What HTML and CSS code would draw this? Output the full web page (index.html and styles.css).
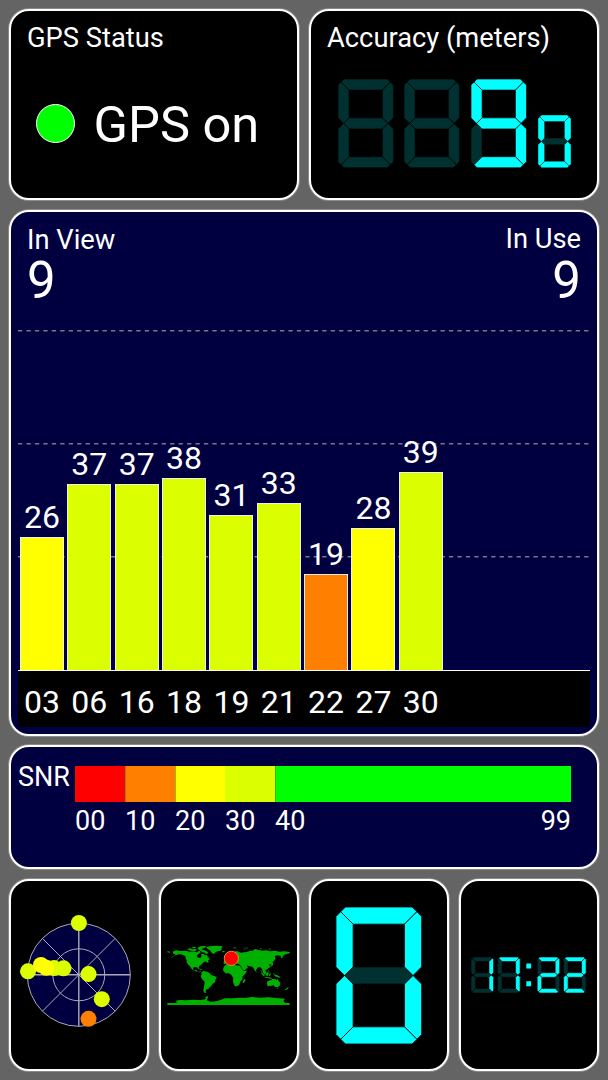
FILE: index.html
```html
<!DOCTYPE html>
<html lang="en">
<head>
<meta charset="utf-8">
<title>GPS Status</title>
<link rel="stylesheet" href="styles.css">
</head>
<body>
<svg class="defs" width="0" height="0" aria-hidden="true">
  <defs>
    <path id="a" d="M1.1 0H8.9L9.45 .55 8 2H2L.55 .55Z"/>
    <path id="b" d="M10 1.1V7L9 8 8 7V2L9.45 .55Z"/>
    <path id="c" d="M10 14.9V9L9 8 8 9V14L9.45 15.45Z"/>
    <path id="d" d="M1.1 16H8.9L9.45 15.45 8 14H2L.55 15.45Z"/>
    <path id="e" d="M0 14.9V9L1 8 2 9V14L.55 15.45Z"/>
    <path id="f" d="M0 1.1V7L1 8 2 7V2L.55 .55Z"/>
    <path id="g" d="M1 8L2 7H8L9 8 8 9H2Z"/>
    <g id="blank"><use href="#a"/><use href="#b"/><use href="#c"/><use href="#d"/><use href="#e"/><use href="#f"/><use href="#g"/></g>
  </defs>
</svg>
<main class="dashboard">
  <section class="row row-top">
    <div class="panel status">
      <h2 class="title">GPS Status</h2>
      <div class="status-line"><span class="lamp"></span><span class="status-text">GPS on</span></div>
    </div>
    <div class="panel accuracy">
      <h2 class="title">Accuracy (meters)</h2>
      <div class="readout">
        <svg class="digit" viewBox="0 0 10 16"><use class="off" href="#blank"/></svg>
        <svg class="digit" viewBox="0 0 10 16"><use class="off" href="#blank"/></svg>
        <svg class="digit" viewBox="0 0 10 16"><use class="off" href="#e"/><g class="on"><use href="#a"/><use href="#b"/><use href="#c"/><use href="#d"/><use href="#f"/><use href="#g"/></g></svg>
        <svg class="digit small" viewBox="0 0 10 16"><use class="off" href="#g"/><g class="on"><use href="#a"/><use href="#b"/><use href="#c"/><use href="#d"/><use href="#e"/><use href="#f"/></g></svg>
      </div>
    </div>
  </section>

  <section class="panel signal">
    <header class="counts">
      <div class="count in-view"><span class="count-label">In View</span><span class="count-value">9</span></div>
      <div class="count in-use"><span class="count-label">In Use</span><span class="count-value">9</span></div>
    </header>
    <div class="plot">
      <svg class="gridlines" viewBox="0 0 572 360">
        <path d="M0 20.7H572M0 133.7H572M0 246.8H572"/>
      </svg>
      <div class="bars">
        <div class="item"><span class="snr">26</span><i class="bar fair" style="height:133px"></i></div>
        <div class="item"><span class="snr">37</span><i class="bar good" style="height:186px"></i></div>
        <div class="item"><span class="snr">37</span><i class="bar good" style="height:186px"></i></div>
        <div class="item"><span class="snr">38</span><i class="bar good" style="height:192px"></i></div>
        <div class="item"><span class="snr">31</span><i class="bar good" style="height:155px"></i></div>
        <div class="item"><span class="snr">33</span><i class="bar good" style="height:167px"></i></div>
        <div class="item"><span class="snr">19</span><i class="bar weak" style="height:96px"></i></div>
        <div class="item"><span class="snr">28</span><i class="bar fair" style="height:142px"></i></div>
        <div class="item"><span class="snr">39</span><i class="bar good" style="height:198px"></i></div>
      </div>
    </div>
    <div class="axis">
      <span>03</span><span>06</span><span>16</span><span>18</span><span>19</span><span>21</span><span>22</span><span>27</span><span>30</span>
    </div>
  </section>

  <section class="panel legend">
    <span class="legend-name">SNR</span>
    <div class="scale">
      <div class="swatch none"></div><div class="swatch weak"></div><div class="swatch fair"></div><div class="swatch good"></div><div class="swatch best"></div>
      <span>00</span><span>10</span><span>20</span><span>30</span><span class="ends"><b>40</b><b>99</b></span>
    </div>
  </section>

  <section class="row row-bottom">
    <div class="panel">
      <svg class="tile" viewBox="11 881 136 188">
        <g class="sky">
          <circle class="disc" cx="78.8" cy="974.8" r="51.5"/>
          <circle cx="78.8" cy="974.8" r="26"/>
          <path d="M42.4 938.4L115.2 1011.2M115.2 938.4L42.4 1011.2"/>
          <path class="axes" d="M27.3 974.8H130.3M78.8 923.3V1026.3"/>
        </g>
        <g class="sat-good">
          <circle cx="78.9" cy="923" r="8"/><circle cx="28" cy="971.3" r="8"/>
          <circle cx="63.5" cy="968.3" r="8"/><circle cx="54" cy="968.1" r="8"/>
          <circle cx="88.6" cy="974.1" r="8"/><circle cx="101.8" cy="999.2" r="8"/>
        </g>
        <g class="sat-fair"><circle cx="41" cy="965" r="8"/><circle cx="46.3" cy="967.8" r="8"/></g>
        <circle class="sat-weak" cx="88.5" cy="1018.8" r="8"/>
      </svg>
    </div>
    <div class="panel">
      <svg class="tile" viewBox="161 881 136 188">
        <g transform="translate(160 930) scale(.33333)">
          <g class="land">
            <path d="M22 64L32 65 30 68 22 67ZM38 65L48 61 62 63 76 62 90 65 101 64 110 67 118 62 122 67 116 72 110 77 114 83 121 84 125 78 123 72 131 72 135 76 141 74 144 82 149 88 143 92 148 95 141 98 136 94 128 99 124 104 119 107 116 112 118 118 113 113 107 111 101 112 99 117 103 121 109 119 111 123 118 126 120 123 123 125 118 127 108 124 100 120 95 117 91 110 84 103 80 97 81 87 76 79 68 74 57 73 46 76 39 79 47 73 40 71Z"/>
            <path d="M82 57L91 55 98 58 105 56 111 59 106 63 94 62 87 61ZM94 52L104 50 109 53 101 55ZM111 55L121 49 139 48 134 54 124 57 130 60 139 63 146 70 139 72 134 68 126 66 119 61Z"/>
            <path d="M137 53L148 49 168 47 189 49 184 54 186 58 181 62 173 64 166 67 162 72 156 70 151 62 144 57Z"/>
            <path d="M186 63L193 62 195 65 189 67ZM219 53L229 52 227 55 220 55ZM203 77L207 74 209 82 204 84ZM112 115L120 116 126 118 124 120 115 117Z"/>
            <path d="M124 127L131 123 141 125 149 129 153 135 163 138 170 142 167 148 165 157 158 161 153 169 147 173 145 178 139 178 137 184 139 188 132 188 130 181 133 165 134 155 126 147 122 139 125 133Z"/>
            <path d="M193 103L190 98 194 92 204 91 209 85 216 83 219 77 216 70 228 63 237 65 243 69 251 67 262 66 268 63 278 62 285 57 296 60 307 62 318 61 331 64 345 62 359 65 373 64 390 66 389 70 376 73 368 78 363 86 362 77 352 76 344 78 347 85 341 94 335 98 337 103 333 105 330 101 327 104 331 110 326 115 319 119 316 121 319 129 313 134 308 126 307 119 301 111 294 112 288 121 286 125 281 115 277 110 267 108 260 106 264 112 256 119 250 121 244 112 241 106 237 103 229 100 225 98 220 93 216 98 207 98 200 99Z"/>
            <path d="M196 104L207 101 219 104 229 106 240 107 247 119 252 123 261 122 256 131 248 139 247 148 241 155 238 164 231 169 224 168 219 157 220 145 214 134 206 130 196 130 189 121 190 113Z"/>
            <path d="M249 153L254 146 257 150 252 159 248 158ZM290 122L293 127 290 127ZM334 99L339 97 339 105 332 110 329 109 336 104ZM325 119L329 124 326 126ZM303 126L309 131 315 138 311 139 305 133ZM317 130L325 125 326 132 323 138 317 136ZM328 132L332 130 331 138 327 138ZM340 133L350 135 358 139 362 144 354 142 345 139ZM314 141L327 142 337 144 334 146 315 143ZM326 129L333 128 332 130 327 130Z"/>
            <path d="M322 154L331 151 337 147 346 147 349 151 353 146 356 153 361 159 359 167 353 172 346 171 340 166 331 168 323 169 321 161ZM351 174H355L353 177ZM382 173L387 171 383 177 376 181 375 178Z"/>
            <path d="M22 219H50L48 212 60 210 78 211 98 209 121 210 137 208 136 202 145 197 143 205 140 211 152 215 169 214 184 209 195 205 219 205 240 203 257 204 274 201 300 203 325 202 348 204 375 206 370 213 376 219H389V225H22Z"/>
            <path d="M76 81L84 76 109 74 111 82 105 88 112 98 104 106 91 105 82 96Z"/>
          </g>
          <g class="coast"><path d="M300 57L306 55M251 58L256 55 263 54M326 57L333 57M370 77L366 84M338 88L342 93M40 80L34 83M302 120L312 136M320 116L323 116M340 130L344 134M144 82L149 86"/></g>
          <circle class="here" cx="214" cy="85" r="21.3"/>
        </g>
      </svg>
    </div>
    <div class="panel center">
      <svg class="digit large" viewBox="0 0 10 16"><use class="off" href="#g"/><g class="on"><use href="#a"/><use href="#b"/><use href="#c"/><use href="#d"/><use href="#e"/><use href="#f"/></g></svg>
    </div>
    <div class="panel">
      <svg class="tile clock" viewBox="461 881 136 188">
        <g transform="translate(471 957) scale(2.25)"><use class="off" href="#blank"/><g class="on"><use href="#b"/><use href="#c"/></g></g>
        <g transform="translate(497.6 957) scale(2.25)"><use class="off" href="#blank"/><g class="on"><use href="#a"/><use href="#b"/><use href="#c"/></g></g>
        <path class="colon" d="M526.3 963.5h4.8v5h-4.8zM526.3 981.2h4.8v5h-4.8z"/>
        <g transform="translate(537.2 957) scale(2.25)"><use class="off" href="#blank"/><g class="on"><use href="#a"/><use href="#b"/><use href="#g"/><use href="#e"/><use href="#d"/></g></g>
        <g transform="translate(563.6 957) scale(2.25)"><use class="off" href="#blank"/><g class="on"><use href="#a"/><use href="#b"/><use href="#g"/><use href="#e"/><use href="#d"/></g></g>
      </svg>
    </div>
  </section>
</main>
</body>
</html>
```
FILE: styles.css
```css
* { box-sizing: border-box; }
body {
  margin: 0;
  background: #646464;
  color: #fff;
  font-family: Roboto, "Liberation Sans", sans-serif;
}
.defs { display: block; }
.dashboard {
  display: flex;
  flex-direction: column;
  width: 608px;
  height: 1080px;
  padding: 9px 9px 9px;
}
.row { display: grid; gap: 10px; }
.row-top { grid-template-columns: 290px 290px; height: 191px; margin-bottom: 10px; }
.row-bottom { grid-template-columns: repeat(4, 140px); height: 192px; }
.panel {
  border: 2px solid #fff;
  border-radius: 20px;
  background: #000;
  box-shadow: 0 0 0 1px rgba(255, 255, 255, .25);
  overflow: hidden;
}
.title {
  margin: 11px 0 0 16px;
  font-size: 27.3px;
  font-weight: 400;
  line-height: 32px;
}
.status-line { display: flex; align-items: center; margin: 40px 0 0 25px; }
.lamp {
  width: 39px;
  height: 39px;
  margin-top: -4px;
  border: 1.5px solid #fff;
  border-radius: 50%;
  background: #0f0;
}
.status-text { margin-left: 18.5px; font-size: 50.6px; line-height: 62px; }
.readout { display: flex; align-items: flex-end; gap: 11.3px; margin: 25px 0 0 26.7px; }

/* Seven-segment digits */
.digit { display: block; width: 55.5px; height: 88.8px; overflow: visible; }
.digit.small { width: 33px; height: 52.8px; }
.digit.large { width: 85.6px; height: 137px; }
.on, .off { stroke: #000; stroke-width: .12; }
.digit.large .on, .digit.large .off { stroke-width: .09; }
.clock .on, .clock .off { stroke-width: .25; }
.on { fill: #0ff; }
.off { fill: #003030; }
.colon { fill: #0ff; }

/* Satellite signal chart */
.signal { height: 526px; margin-bottom: 9px; padding: 0 7px; background: #000040; }
.counts { display: flex; justify-content: space-between; height: 98px; padding: 0 9px 0 9px; }
.count { display: flex; flex-direction: column; }
.in-view { padding-top: 12px; }
.in-use { padding-top: 11px; align-items: flex-end; }
.count-label { font-size: 27.3px; line-height: 32px; }
.count-value { font-size: 51px; line-height: 50px; }
.in-use .count-value { margin-top: 1px; }
.plot { display: grid; height: 361px; border-bottom: 1px solid #fff; }
.gridlines, .bars { grid-area: 1 / 1; }
.gridlines { width: 572px; height: 360px; }
.gridlines path { stroke: #777788; stroke-width: 1.6; stroke-dasharray: 4.3 4.15; }
.bars { display: flex; align-items: flex-end; gap: 3.35px; padding-left: 2px; }
.item { display: flex; flex-direction: column; align-items: center; width: 44px; }
.snr { font-size: 32px; line-height: 30px; margin-bottom: 5px; }
.bar { display: block; width: 44px; border: 1px solid #eee; border-bottom: 0; }
.axis { display: flex; gap: 3.35px; height: 56px; padding-left: 2px; background: #000; font-size: 32px; line-height: 62px; }
.axis span { width: 44px; text-align: center; }
.none { background: #f00; }
.weak { background: #ff8000; }
.fair { background: #ff0; }
.good { background: #dcff00; }
.best { background: #0f0; }

/* SNR colour legend */
.legend { display: flex; height: 124px; margin-bottom: 10px; padding: 19px 0 0 7px; background: #000040; font-size: 27px; }
.legend-name { width: 57px; line-height: 22px; }
.scale { display: grid; grid-template-columns: repeat(4, 50px) 296px; grid-template-rows: 35.5px 38px; line-height: 38px; }
.swatch + .swatch { border-left: 1px solid rgba(110, 110, 60, .55); }
.swatch.good { border: 0; }
.ends { display: flex; justify-content: space-between; }
.ends b { font-weight: 400; }

/* Bottom tiles */
.tile { display: block; width: 136px; height: 188px; }
.center { display: grid; place-items: center; }
.sky { fill: none; stroke: #aaaab4; stroke-width: 1; }
.sky .disc { fill: #000040; }
.sky .axes { stroke-width: 1.4; }
.sat-good { fill: #dcff00; }
.sat-fair { fill: #ff0; }
.sat-weak { fill: #ff8000; }
.land { fill: #00b000; }
.coast { fill: none; stroke: #00a000; stroke-width: 3; stroke-dasharray: 3 2; }
.here { fill: #f00; stroke: #ff9d3c; stroke-width: 2.5; }
```
